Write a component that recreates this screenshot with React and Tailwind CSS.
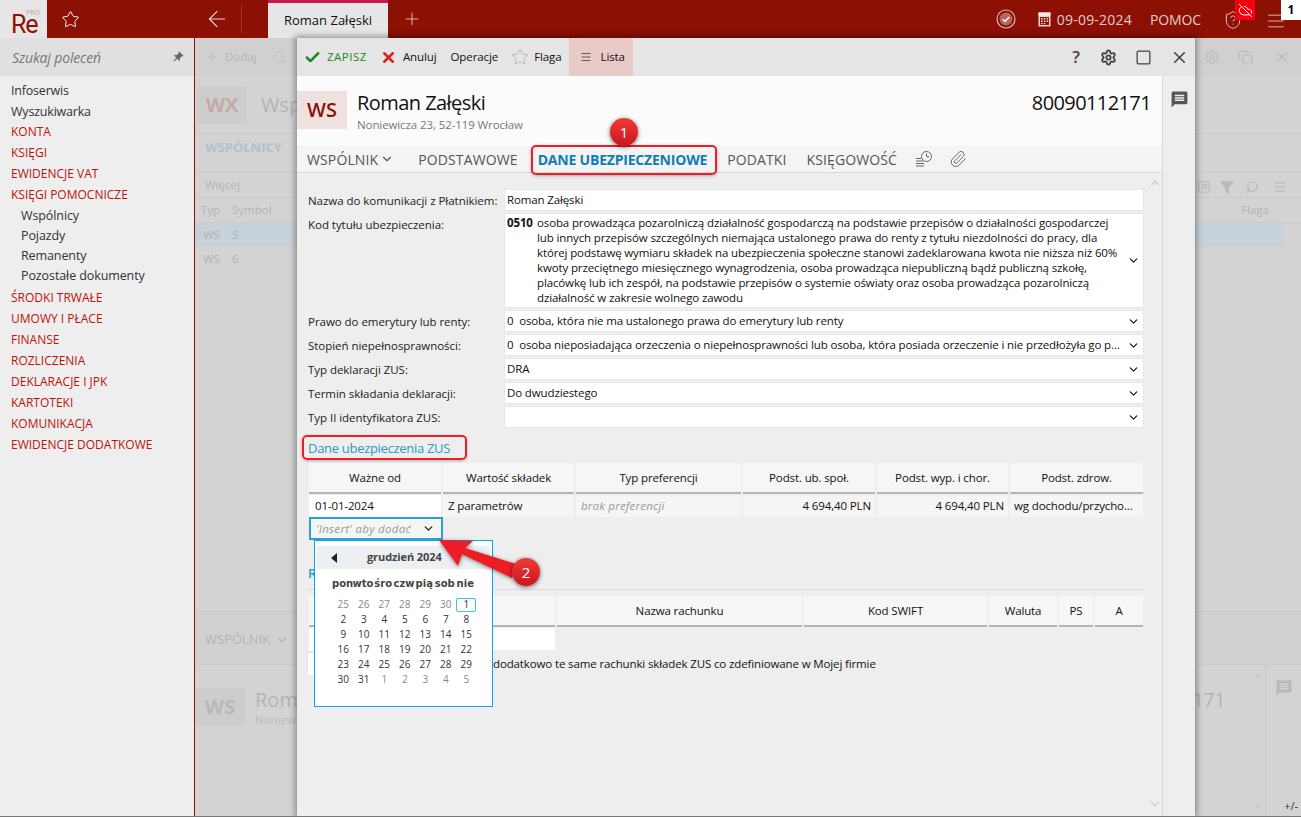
import React from 'react';
import { Check, X, Star, Menu, Settings, Square, ChevronDown, ChevronUp, Plus, ArrowLeft, ShieldQuestion, CloudOff, Paperclip, Search, Copy, Funnel, SquareArrowUpRight } from 'lucide-react';
import { MdPushPin, MdMessage } from 'react-icons/md';

const navItems = [
  ['Infoserwis', 'n', ''], ['Wyszukiwarka', 'n', ''], ['KONTA', 'r', '-mt-[2px]'], ['KSIĘGI', 'r', ''], ['EWIDENCJE VAT', 'r', ''], ['KSIĘGI POMOCNICZE', 'r', ''],
  ['Wspólnicy', 's', 'mt-[1px]'], ['Pojazdy', 's', ''], ['Remanenty', 's', ''], ['Pozostałe dokumenty', 's', ''],
  ['ŚRODKI TRWAŁE', 'r', 'mt-[1px]'], ['UMOWY I PŁACE', 'r', ''], ['FINANSE', 'r', ''], ['ROZLICZENIA', 'r', ''], ['DEKLARACJE I JPK', 'r', ''], ['KARTOTEKI', 'r', ''], ['KOMUNIKACJA', 'r', ''], ['EWIDENCJE DODATKOWE', 'r', ''],
];

function CalIcon() {
  return (
    <svg width="13" height="15" viewBox="0 0 13 15" className="mr-[6px]">
      <rect x="0.5" y="0.5" width="12" height="14" fill="#e9d8d5" />
      <rect x="0.5" y="0.5" width="12" height="3" fill="#f5ecea" />
      <rect x="2" y="5" width="9" height="8" fill="#8c1004" />
      <path d="M3 6h1.5v1.5H3zM5.8 6h1.5v1.5H5.8zM8.6 6h1.5v1.5H8.6zM3 8.6h1.5v1.5H3zM5.8 8.6h1.5v1.5H5.8zM8.6 8.6h1.5v1.5H8.6zM3 11h1.5v1.2H3zM5.8 11h1.5v1.2H5.8z" fill="#f2e6e4" />
    </svg>
  );
}

function CheckBadge() {
  return (
    <svg width="20" height="20" viewBox="0 0 20 20" className="mr-[22px]">
      <circle cx="10" cy="10" r="9" fill="none" stroke="#d9bdb9" strokeWidth="1.2" />
      <circle cx="10" cy="10" r="6.5" fill="#b5675f" />
      <path d="M6.8 10.2l2.2 2.2 4.2-4.4" fill="none" stroke="#fff" strokeWidth="1.5" />
    </svg>
  );
}

function HistoryIcon() {
  return (
    <svg width="18" height="19" viewBox="0 0 18 19" fill="none" stroke="#666" strokeWidth="1">
      <circle cx="11.5" cy="6.5" r="5" />
      <path d="M11.5 3.5v3.2h2.6" />
      <path d="M1 8.5h5M1 11h7M1 13.5h8M1 16h8" />
    </svg>
  );
}

function Topbar() {
  return (
    <div className="flex h-[38px] shrink-0 items-stretch bg-[#8c1004]">
      <div className="relative flex w-[47px] items-start bg-[#e6e6e6] pl-[11px] pt-[13px]">
        <span className="text-[25px] leading-[23px] tracking-[-1.2px] text-[#8c1004] font-['Roboto',sans-serif]">Re</span>
        <span className="absolute left-[26px] top-[9px] text-[7px] leading-none text-[#b9a09d]">PRO</span>
      </div>
      <div className="flex w-[221px] items-center">
        <Star size={19} strokeWidth={1.2} className="ml-[14px] text-white" />
        <ArrowLeft size={26} strokeWidth={1} className="ml-[124px] text-[#e9d5d2]" />
        <div className="ml-[11px] h-[28px] w-px bg-[#a33a30]" />
      </div>
      <div className="flex w-[120px] items-center justify-center border-t-[3px] border-[#c9184a] bg-[#e6e6e6] text-[13px] font-medium text-[#111]">Roman Załęski</div>
      <Plus size={20} strokeWidth={1} className="ml-[14px] self-center text-[#e9d5d2]" />
      <div className="flex flex-1 items-center justify-end text-[14px] tracking-[0.2px] text-[#e3cdca]">
        <CheckBadge />
        <CalIcon />
        <span className="mr-[18px]">09-09-2024</span>
        <span className="mr-[22px] tracking-[-0.1px]">POMOC</span>
        <ShieldQuestion size={20} strokeWidth={1.2} className="mr-[23px] mt-[2px] text-[#e3cdca]" />
        <Menu size={20} strokeWidth={1} className="mr-[15px] mt-[3px] scale-x-110 text-[#e3cdca]" />
      </div>
      <div className="absolute left-[1235px] top-0 flex h-[20px] w-[20px] items-center justify-center bg-[#f5000f]">
        <CloudOff size={15} strokeWidth={1.5} className="text-white" />
      </div>
      <div className="absolute left-[1281px] top-0 flex h-[20px] w-[20px] items-center justify-center bg-white text-[12px] font-bold text-black">1</div>
    </div>
  );
}

function Sidebar() {
  return (
    <div className="w-[195px] shrink-0 border-r border-[#8c1004] bg-[#eeeeee]">
      <div className="flex h-[38px] items-center justify-between bg-[#e0e0e0] pl-[12px] pr-[10px]">
        <span className="text-[14px] italic tracking-[-0.15px] text-[#777]">Szukaj poleceń</span>
        <MdPushPin size={13} className="rotate-45 text-[#666]" />
      </div>
      <div className="flex flex-col pt-[5px]">
        {navItems.map(([t, k, m]) => (
          <div key={t} className={(
            k === 'r' ? 'flex h-[21px] items-center pl-[11px] text-[12px] text-[#bd130a] '
            : k === 's' ? 'flex h-[20px] items-center pl-[21px] text-[12.5px] tracking-[-0.1px] text-[#333] '
            : 'flex h-[21px] items-center pl-[11px] text-[12.5px] tracking-[-0.2px] text-[#333] '
          ) + m}>{t}</div>
        ))}
      </div>
    </div>
  );
}

function Background() {
  return (
    <div className="flex h-full flex-col bg-[#d3d3d3] text-[#b4b4b4]">
      <div className="flex h-[38px] shrink-0 items-center bg-[#d0d0d0] pl-[9px] pr-[10px] text-[11.5px]">
        <Plus size={16} strokeWidth={3} className="text-[#b9cdb9]" />
        <span className="ml-[5px]">Dodaj</span>
        <Search size={15} strokeWidth={2} className="ml-[15px] text-[#b7c8cf]" />
        <div className="flex-1" />
        <Settings size={16} className="text-[#bdbdbd]" />
        <Copy size={15} className="ml-[18px] text-[#bdbdbd]" />
        <X size={18} className="ml-[20px] text-[#bdbdbd]" />
      </div>
      <div className="flex h-[58px] shrink-0 items-start border-b border-[#cacaca] pl-[2px] pt-[10px]">
        <div className="flex h-[38px] w-[50px] items-center justify-center bg-[#cdcdcd] text-[20px] font-bold text-[#c7a9a6]">WX</div>
        <span className="ml-[14px] mt-[4px] text-[20px] leading-[30px] text-[#b4b4b4]">Wspólnicy</span>
      </div>
      <div className="flex h-[39px] shrink-0 items-start border-b border-[#cacaca] pl-[10px] pt-[4px] text-[13px] font-bold text-[#adc4d0]">WSPÓLNICY</div>
      <div className="flex h-[25px] shrink-0 items-center justify-end border-b border-[#cacaca] pr-[14px]">
        <span className="mr-auto pl-[10px] text-[11.5px]">Więcej</span>
        <SquareArrowUpRight size={14} className="mt-[4px] text-[#b9b9b9]" />
        <Funnel size={14} fill="#b9b9b9" className="ml-[9px] mt-[4px] text-[#b9b9b9]" />
        <Search size={14} className="ml-[11px] mt-[4px] -scale-x-100 text-[#b9b9b9]" />
        <Menu size={14} className="ml-[14px] mt-[4px] text-[#b9b9b9]" />
      </div>
      <div className="flex h-[25px] shrink-0 items-center border-b border-[#cacaca] pl-[6px] pr-[32px] text-[11.5px]">
        <span className="w-[31px]">Typ</span><span>Symbol</span>
        <span className="ml-auto">Flaga</span>
      </div>
      <div className="mr-[18px] flex h-[24px] shrink-0 items-center bg-[#c6d1d9] pl-[8px] text-[11.5px]"><span className="w-[29px]">WS</span><span>5</span></div>
      <div className="flex h-[24px] shrink-0 items-center pl-[8px] text-[11.5px]"><span className="w-[29px]">WS</span><span>6</span></div>
      <div className="mt-[340px] flex h-[54px] shrink-0 items-center border-y border-[#cacaca] bg-[#d1d1d1] pl-[10px] pt-[4px] text-[13px]">WSPÓLNIK<ChevronDown size={14} className="ml-[5px]" /></div>
      <div className="relative flex flex-1 items-start pt-[23px]">
        <ChevronUp size={14} className="absolute right-[36px] top-[4px] text-[#c6c6c6]" />
        <ChevronDown size={14} className="absolute bottom-[4px] right-[36px] text-[#c6c6c6]" />
        <div className="flex h-[38px] w-[50px] items-center justify-center bg-[#cdcdcd] text-[20px] font-bold text-[#b9b9b9]">WS</div>
        <div className="ml-[10px]">
          <div className="text-[20px] leading-[24px]">Roman Załęski</div>
          <div className="text-[11.5px] leading-[16px] text-[#bcbcbc]">Noniewicza 23, 52-119 Wrocław</div>
        </div>
        <div className="ml-auto mr-[40px] text-[20px] leading-[24px] tracking-[-0.6px]">80090112171</div>
        <div className="-mt-[23px] flex h-[151px] w-[36px] justify-center border-l border-[#cacaca] pt-[14px]">
          <MdMessage size={18} className="text-[#b9b9b9]" />
        </div>
      </div>
    </div>
  );
}

function ToolbarBtn({ children, className }) {
  return <div className={'flex items-center ' + (className || '')}>{children}</div>;
}

function Field({ children, chevron = true, h = 'h-[22px]' }) {
  return (
    <div className={'flex items-center justify-between border border-[#e6e6e6] bg-white pl-[2px] pr-[3px] ' + h}>
      <div className="min-w-0 flex-1 truncate">{children}</div>
      {chevron && <ChevronDown size={13} strokeWidth={2.5} className="ml-[3px] shrink-0 text-[#222]" />}
    </div>
  );
}

function Row({ label, children, mt = 'mt-[2px]' }) {
  return (
    <div className={'flex ' + mt}>
      <div className="w-[197px] shrink-0 whitespace-nowrap pt-[3px] pl-[1px] tracking-[-0.04px] text-[#222]">{label}</div>
      <div className="min-w-0 flex-1">{children}</div>
    </div>
  );
}

function Th({ w, children }) {
  return <div className={'flex h-[31px] shrink-0 items-center justify-center border-b-2 border-[#b5b5b5] bg-[#f6f6f6] ' + w}>{children}</div>;
}

function Form() {
  const lines = [
    'osoba prowadząca pozarolniczą działalność gospodarczą na podstawie przepisów o działalności gospodarczej',
    'lub innych przepisów szczególnych niemająca ustalonego prawa do renty z tytułu niezdolności do pracy, dla',
    'której podstawę wymiaru składek na ubezpieczenia społeczne stanowi zadeklarowana kwota nie niższa niż 60%',
    'kwoty przeciętnego miesięcznego wynagrodzenia, osoba prowadząca niepubliczną bądź publiczną szkołę,',
    'placówkę lub ich zespół, na podstawie przepisów o systemie oświaty oraz osoba prowadząca pozarolniczą',
    'działalność w zakresie wolnego zawodu',
  ];
  return (
    <div className="relative min-h-0 flex-1 pl-[10px] pr-[18px] pt-[16px] text-[11.5px] tracking-[-0.13px] text-[#111]">
      <ChevronUp size={14} className="absolute right-[0px] top-[3px] text-[#ccc]" />
      <ChevronDown size={14} className="absolute bottom-[5px] right-[0px] text-[#ccc]" />
      <Row label="Nazwa do komunikacji z Płatnikiem:" mt="mt-0"><Field chevron={false}>Roman Załęski</Field></Row>
      <Row label="Kod tytułu ubezpieczenia:">
        <div className="flex h-[95px] items-center border border-[#e6e6e6] bg-white pl-[2px] pr-[3px]">
          <div className="flex flex-1 self-start pt-[1px] leading-[15px]">
            <b className="w-[30px] shrink-0 font-bold">0510</b>
            <div className="whitespace-nowrap">{lines.map(l => <div key={l}>{l}</div>)}</div>
          </div>
          <ChevronDown size={13} strokeWidth={2.5} className="shrink-0 text-[#222]" />
        </div>
      </Row>
      <Row label="Prawo do emerytury lub renty:"><Field>0&nbsp; osoba, która nie ma ustalonego prawa do emerytury lub renty</Field></Row>
      <Row label="Stopień niepełnosprawności:"><Field>0&nbsp; osoba nieposiadająca orzeczenia o niepełnosprawności lub osoba, która posiada orzeczenie i nie przedłożyła go pracodawcy</Field></Row>
      <Row label="Typ deklaracji ZUS:"><Field>DRA</Field></Row>
      <Row label="Termin składania deklaracji:"><Field>Do dwudziestego</Field></Row>
      <Row label="Typ II identyfikatora ZUS:"><Field>&nbsp;</Field></Row>

      <div className="mt-[10px] pl-[1px] text-[13px] leading-[20px] tracking-[-0.3px] text-[#2a9bc4]">Dane ubezpieczenia ZUS</div>

      <div className="ml-[2px] mt-[5px] w-[834px]">
        <div className="flex gap-[2px]">
          <Th w="w-[132px]">Ważne od</Th>
          <Th w="w-[131px]">Wartość składek</Th>
          <Th w="w-[165px]">Typ preferencji</Th>
          <Th w="w-[132px]">Podst. ub. społ.</Th>
          <Th w="w-[131px]">Podst. wyp. i chor.</Th>
          <Th w="w-[133px]">Podst. zdrow.</Th>
        </div>
        <div className="flex h-[23px] gap-[2px] pt-[1px]">
          <div className="flex w-[132px] items-center bg-white pl-[6px]">01-01-2024</div>
          <div className="flex w-[131px] items-center bg-[#f5f5f5] pl-[5px]">Z parametrów</div>
          <div className="flex w-[165px] items-center bg-[#f5f5f5] pl-[5px] italic tracking-[0.2px] text-[#999]">brak preferencji</div>
          <div className="flex w-[132px] items-center justify-end bg-[#f5f5f5] pr-[4px]">4 694,40 PLN</div>
          <div className="flex w-[131px] items-center justify-end bg-[#f5f5f5] pr-[4px]">4 694,40 PLN</div>
          <div className="flex w-[133px] items-center bg-[#f5f5f5] pl-[4px]">wg dochodu/przycho...</div>
        </div>
        <div className="flex h-[23px] w-[134px] items-center justify-between border-2 border-[#29a3d6] bg-[#f5f5f5] pl-[5px] pr-[6px] italic tracking-[0.3px] text-[#999]">
          <span>'Insert' aby dodać</span>
          <ChevronDown size={13} strokeWidth={2.5} className="text-[#222]" />
        </div>
      </div>

      <div className="mt-[23px] border-b border-[#dcdcdc] pb-[6px] pl-[1px] text-[13px] font-semibold leading-[20px] text-[#2a9bc4]">Rachunki</div>
      <div className="ml-[2px] mt-[6px] w-[834px]">
        <div className="flex gap-[2px]">
          <Th w="w-[246px]">Numer rachunku</Th>
          <Th w="w-[245px]">Nazwa rachunku</Th>
          <Th w="w-[183px]">Kod SWIFT</Th>
          <Th w="w-[68px]">Waluta</Th>
          <Th w="w-[34px]">PS</Th>
          <Th w="w-[48px]">A</Th>
        </div>
        <div className="mt-[1px] h-[22px] w-[246px] bg-white" />
      </div>
      <div className="mt-[2px] flex h-[24px] items-center">
        <div className="h-[24px] w-[22px] border border-[#e6e6e6] bg-white" />
        <span className="ml-[164px] whitespace-nowrap">dodatkowo te same rachunki składek ZUS co zdefiniowane w Mojej firmie</span>
      </div>
    </div>
  );
}

function Modal() {
  return (
    <div className="absolute bottom-0 left-[102px] top-0 flex w-[898px] flex-col bg-[#eeeeee] shadow-[0_0_6px_2px_rgba(0,0,0,0.35)]">
      <div className="flex h-[38px] shrink-0 items-stretch bg-[#e5e5e5] text-[11.5px] tracking-[-0.1px] text-[#111]">
        <ToolbarBtn className="ml-[7px]">
          <Check size={17} strokeWidth={3.5} className="text-[#1d8a1d]" />
          <span className="ml-[6px] font-medium tracking-[0.5px] text-[#1d8a1d]">ZAPISZ</span>
        </ToolbarBtn>
        <ToolbarBtn className="ml-[13px]">
          <X size={17} strokeWidth={3.5} className="text-[#d9201a]" />
          <span className="ml-[6px]">Anuluj</span>
        </ToolbarBtn>
        <ToolbarBtn className="ml-[14px]">Operacje</ToolbarBtn>
        <ToolbarBtn className="ml-[13px]">
          <Star size={18} strokeWidth={0.8} className="text-[#999]" />
          <span className="ml-[5px]">Flaga</span>
        </ToolbarBtn>
        <ToolbarBtn className="ml-[7px] w-[64px] bg-[#e8cbc7] pl-[11px]">
          <Menu size={12} strokeWidth={1.5} className="text-[#333]" />
          <span className="ml-[9px]">Lista</span>
        </ToolbarBtn>
        <div className="flex flex-1 items-center justify-end pr-[6px] text-[#444]">
          <span className="mr-[20px] text-[17px] font-semibold">?</span>
          <Settings size={17} strokeWidth={2.6} className="mr-[18px]" />
          <Square size={17} strokeWidth={1.8} className="mr-[18px]" />
          <X size={19} strokeWidth={2} />
        </div>
      </div>
      <div className="flex min-h-0 flex-1">
        <div className="flex min-w-0 flex-1 flex-col">
          <div className="flex h-[70px] shrink-0 items-start bg-[#fbfbfb] pr-[11px] pt-[15px]">
            <div className="flex h-[38px] w-[50px] items-center justify-center bg-[#efe1df] text-[20px] font-semibold text-[#8c1004]">WS</div>
            <div className="ml-[10px]">
              <div className="-mt-[1px] text-[20px] leading-[25px] tracking-[-0.55px] text-[#111]">Roman Załęski</div>
              <div className="mt-[3px] text-[11.5px] leading-[14px] tracking-[-0.1px] text-[#777]">Noniewicza 23, 52-119 Wrocław</div>
            </div>
            <div className="-mt-[1px] ml-auto text-[20px] leading-[25px] tracking-[-0.6px] text-[#111]">80090112171</div>
          </div>
          <div className="flex h-[27px] shrink-0 items-center border-b border-[#d9d9d9] bg-[#f4f4f4] pl-[10px] text-[14px] tracking-[0.12px] text-[#555]">
            <span>WSPÓLNIK</span>
            <ChevronDown size={14} className="ml-[2px]" />
            <span className="ml-[24px]">PODSTAWOWE</span>
            <span className="ml-[20px] font-bold tracking-[-0.2px] text-[#0f7db5]">DANE UBEZPIECZENIOWE</span>
            <span className="ml-[20px]">PODATKI</span>
            <span className="ml-[20px]">KSIĘGOWOŚĆ</span>
            <span className="ml-[18px]"><HistoryIcon /></span>
            <Paperclip size={18} strokeWidth={1.3} className="ml-[16px] text-[#666]" />
          </div>
          <Form />
        </div>
        <div className="flex w-[33px] shrink-0 justify-center border-l border-[#d9d9d9] bg-[#eeeeee] pt-[14px]">
          <MdMessage size={19} className="text-[#555]" />
        </div>
      </div>
    </div>
  );
}

function Calendar() {
  const grey = ['25', '26', '27', '28', '29', '30'];
  const nums = Array.from({ length: 30 }, (_, i) => String(i + 2));
  const tail = ['1', '2', '3', '4', '5'];
  const weekdays = ['pon', 'wto', 'śro', 'czw', 'pią', 'sob', 'nie'];
  return (
    <div className="absolute left-[314px] top-[540px] h-[167px] w-[179px] border border-[#0aa5e8] bg-white text-[10px] text-[#333]">
      <div className="mx-[2px] mt-[5px] flex h-[23px] items-center bg-[#edf0f3] pl-[14px]">
        <span className="h-0 w-0 border-y-[5px] border-r-[6px] border-y-transparent border-r-[#222]" />
        <span className="ml-[30px] text-[11px] font-bold tracking-[-0.1px] text-[#444]">grudzień 2024</span>
      </div>
      <div className="ml-[17px] mt-[7px] grid w-[143.5px] grid-cols-7 font-['DejaVu_Sans',sans-serif] text-[10px] font-bold text-[#444]">
        {weekdays.map(w => <div key={w} className="text-center">{w}</div>)}
      </div>
      <div className="ml-[18px] mt-[6px] grid w-[143.5px] grid-cols-7">
        {grey.map(d => <div key={'g' + d} className="flex h-[15px] items-center justify-center text-[#888]">{d}</div>)}
        <div className="flex h-[15px] items-center justify-center"><span className="flex h-[14px] w-[20px] items-center justify-center rounded-[2px] border border-[#3bc4ee]">1</span></div>
        {nums.map(d => <div key={d} className="flex h-[15px] items-center justify-center">{d}</div>)}
        {tail.map(d => <div key={'t' + d} className="flex h-[15px] items-center justify-center text-[#888]">{d}</div>)}
      </div>
    </div>
  );
}

function Bubble({ n, className }) {
  return (
    <div className={'absolute flex h-[28px] w-[28px] items-center justify-center rounded-full bg-gradient-to-b from-[#ee3a3a] to-[#c9151b] text-[15px] text-white shadow-[0_1px_4px_rgba(0,0,0,0.6)] ' + className}>{n}</div>
  );
}

function Callouts() {
  return (
    <>
      <div className="absolute left-[531px] top-[145px] h-[30px] w-[186px] rounded-[5px] border-2 border-[#ee1c25] shadow-[0_1px_3px_rgba(0,0,0,0.3)]" />
      <Bubble n="1" className="left-[610px] top-[118px]" />
      <div className="absolute left-[302px] top-[435px] h-[25px] w-[165px] rounded-[5px] border-2 border-[#ee1c25] shadow-[0_1px_3px_rgba(0,0,0,0.25)]" />
      <svg width="110" height="60" viewBox="0 0 110 60" className="absolute left-[435px] top-[535px] drop-shadow-[0_1px_2px_rgba(0,0,0,0.5)]">
        <path d="M4 5 L38 6 L30 13 L81 29 L77 43 L27 19 L23 31 Z" fill="#ee1c25" />
      </svg>
      <Bubble n="2" className="left-[512px] top-[558px]" />
    </>
  );
}

export default function App() {
  return (
    <div className="relative flex h-[817px] w-[1301px] flex-col overflow-hidden border-b border-[#777] font-['Open_Sans','Noto_Sans',sans-serif]">
      <Topbar />
      <div className="flex min-h-0 flex-1">
        <Sidebar />
        <div className="relative min-w-0 flex-1">
          <Background />
          <Modal />
          <span className="absolute bottom-[2px] right-[3px] text-[11px] text-[#333]">+/-</span>
        </div>
      </div>
      <Calendar />
      <Callouts />
    </div>
  );
}
